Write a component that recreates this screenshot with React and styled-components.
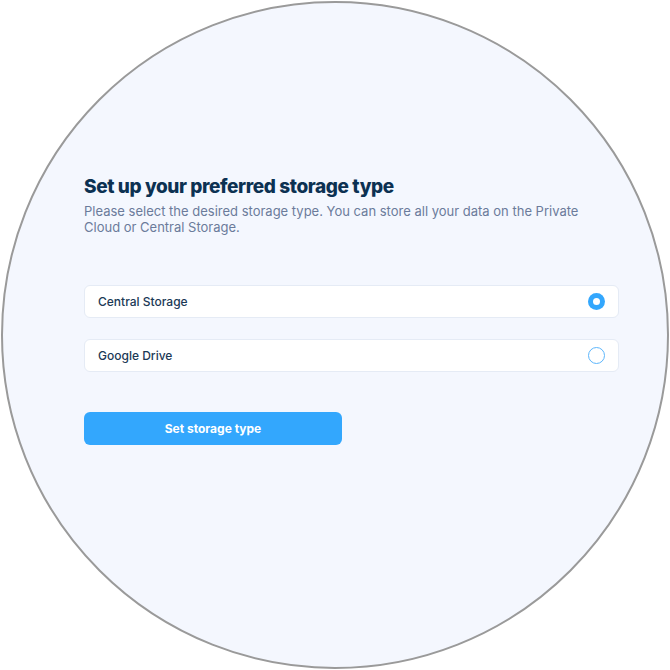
import React, { useState } from "react";
import styled, { createGlobalStyle } from "styled-components";

const GlobalStyle = createGlobalStyle`
  * {
    box-sizing: border-box;
  }
  body {
    margin: 0;
    background: #ffffff;
    font-family: Inter, "Liberation Sans", sans-serif;
  }
`;

const Circle = styled.div`
  width: 668px;
  height: 668px;
  margin: 1px;
  border: 2px solid #9a9a9a;
  border-radius: 50%;
  background-color: #f4f7fe;
  padding: 170px 48px 0 81px;
`;

const Title = styled.h1`
  margin: 0;
  font-size: 19px;
  font-weight: 800;
  color: #0c3152;
  line-height: 28px;
  letter-spacing: -0.4px;
`;

const Subtitle = styled.p`
  margin: 2px 0 0;
  font-size: 13px;
  line-height: 16px;
  color: #6b7b9b;
`;

const Options = styled.div`
  display: flex;
  flex-direction: column;
  gap: 21px;
  margin-top: 50px;
`;

const Option = styled.label`
  display: flex;
  align-items: center;
  justify-content: space-between;
  height: 33px;
  padding: 0 13px 0 13px;
  background: #ffffff;
  border: 1px solid #e5ebf5;
  border-radius: 6px;
  font-size: 12px;
  font-weight: 500;
  color: #1b3956;
  cursor: pointer;
`;

const Radio = styled.span`
  width: 17px;
  height: 17px;
  border-radius: 50%;
  display: flex;
  align-items: center;
  justify-content: center;
  border: ${(p) => (p.checked ? "none" : "1.2px solid #5db6fc")};
  background: ${(p) => (p.checked ? "#33a7fd" : "#ffffff")};

  &::after {
    content: "";
    display: ${(p) => (p.checked ? "block" : "none")};
    width: 7px;
    height: 7px;
    border-radius: 50%;
    background: #ffffff;
  }
`;

const SubmitBtn = styled.button`
  margin-top: 40px;
  width: 258px;
  height: 33px;
  border: none;
  border-radius: 6px;
  background-color: #33a7fd;
  color: #ffffff;
  font-family: inherit;
  font-size: 12px;
  font-weight: 700;
  cursor: pointer;
`;

const storageTypes = ["Central Storage", "Google Drive"];

function App() {
  const [selected, setSelected] = useState("Central Storage");

  return (
    <>
      <GlobalStyle />
      <Circle>
        <Title>Set up your preferred storage type</Title>
        <Subtitle>
          Please select the desired storage type. You can store all your data on
          the Private
          <br />
          Cloud or Central Storage.
        </Subtitle>
        <Options>
          {storageTypes.map((el) => (
            <Option key={el} onClick={() => setSelected(el)}>
              {el}
              <Radio checked={selected === el} />
            </Option>
          ))}
        </Options>
        <SubmitBtn>Set storage type</SubmitBtn>
      </Circle>
    </>
  );
}

export default App;
